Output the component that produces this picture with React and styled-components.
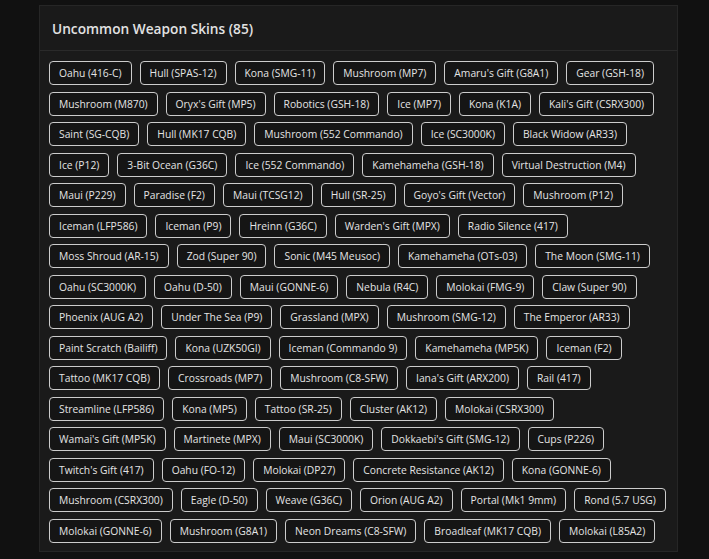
import React from 'react'
import styled, { createGlobalStyle } from 'styled-components'

const GlobalStyle = createGlobalStyle`
  html, body {
    margin: 0;
    padding: 0;
    background: #111111;
  }
  body {
    font-family: 'Open Sans', 'Noto Sans', sans-serif;
  }
`

// rows as they wrap in the panel
const rows = [
  ['Oahu (416-C)', 'Hull (SPAS-12)', 'Kona (SMG-11)', 'Mushroom (MP7)', "Amaru's Gift (G8A1)", 'Gear (GSH-18)'],
  ['Mushroom (M870)', "Oryx's Gift (MP5)", 'Robotics (GSH-18)', 'Ice (MP7)', 'Kona (K1A)', "Kali's Gift (CSRX300)"],
  ['Saint (SG-CQB)', 'Hull (MK17 CQB)', 'Mushroom (552 Commando)', 'Ice (SC3000K)', 'Black Widow (AR33)'],
  ['Ice (P12)', '3-Bit Ocean (G36C)', 'Ice (552 Commando)', 'Kamehameha (GSH-18)', 'Virtual Destruction (M4)'],
  ['Maui (P229)', 'Paradise (F2)', 'Maui (TCSG12)', 'Hull (SR-25)', "Goyo's Gift (Vector)", 'Mushroom (P12)'],
  ['Iceman (LFP586)', 'Iceman (P9)', 'Hreinn (G36C)', "Warden's Gift (MPX)", 'Radio Silence (417)'],
  ['Moss Shroud (AR-15)', 'Zod (Super 90)', 'Sonic (M45 Meusoc)', 'Kamehameha (OTs-03)', 'The Moon (SMG-11)'],
  ['Oahu (SC3000K)', 'Oahu (D-50)', 'Maui (GONNE-6)', 'Nebula (R4C)', 'Molokai (FMG-9)', 'Claw (Super 90)'],
  ['Phoenix (AUG A2)', 'Under The Sea (P9)', 'Grassland (MPX)', 'Mushroom (SMG-12)', 'The Emperor (AR33)'],
  ['Paint Scratch (Bailiff)', 'Kona (UZK50GI)', 'Iceman (Commando 9)', 'Kamehameha (MP5K)', 'Iceman (F2)'],
  ['Tattoo (MK17 CQB)', 'Crossroads (MP7)', 'Mushroom (C8-SFW)', "Iana's Gift (ARX200)", 'Rail (417)'],
  ['Streamline (LFP586)', 'Kona (MP5)', 'Tattoo (SR-25)', 'Cluster (AK12)', 'Molokai (CSRX300)'],
  ["Wamai's Gift (MP5K)", 'Martinete (MPX)', 'Maui (SC3000K)', "Dokkaebi's Gift (SMG-12)", 'Cups (P226)'],
  ["Twitch's Gift (417)", 'Oahu (FO-12)', 'Molokai (DP27)', 'Concrete Resistance (AK12)', 'Kona (GONNE-6)'],
  ['Mushroom (CSRX300)', 'Eagle (D-50)', 'Weave (G36C)', 'Orion (AUG A2)', 'Portal (Mk1 9mm)', 'Rond (5.7 USG)'],
  ['Molokai (GONNE-6)', 'Mushroom (G8A1)', 'Neon Dreams (C8-SFW)', 'Broadleaf (MK17 CQB)', 'Molokai (L85A2)'],
]

const total = rows.reduce((n, r) => n + r.length, 0)

const Page = styled.div`
  padding: 5px 31px 9px 39px;
`

const Panel = styled.section`
  width: 639px;
  box-sizing: border-box;
  background: #1a1a1a;
  border: 1px solid #262626;
`

const Header = styled.div`
  height: 44px;
  display: flex;
  align-items: center;
  padding: 0 12px;
  border-bottom: 1px solid #2a2a2a;
  color: #e2e2e2;
  font-size: 13.7px;
  font-weight: 600;
`

const Body = styled.div`
  display: flex;
  flex-direction: column;
  gap: 6.5px;
  padding: 10px 9px 8px 9px;
`

const Row = styled.div`
  display: flex;
  gap: 8px;
`

const Tag = styled.span`
  display: inline-flex;
  align-items: center;
  height: 24px;
  box-sizing: border-box;
  padding: 0 9px;
  border: 1px solid #cccccc;
  border-radius: 4px;
  background: #151515;
  color: #e4e4e4;
  font-size: 10.3px;
  white-space: nowrap;
`

export default function App() {
  return (
    <>
      <GlobalStyle />
      <Page>
        <Panel>
          <Header>Uncommon Weapon Skins ({total})</Header>
          <Body>
            {rows.map((row, i) => (
              <Row key={i}>
                {row.map(s => (
                  <Tag key={s}>{s}</Tag>
                ))}
              </Row>
            ))}
          </Body>
        </Panel>
      </Page>
    </>
  )
}
